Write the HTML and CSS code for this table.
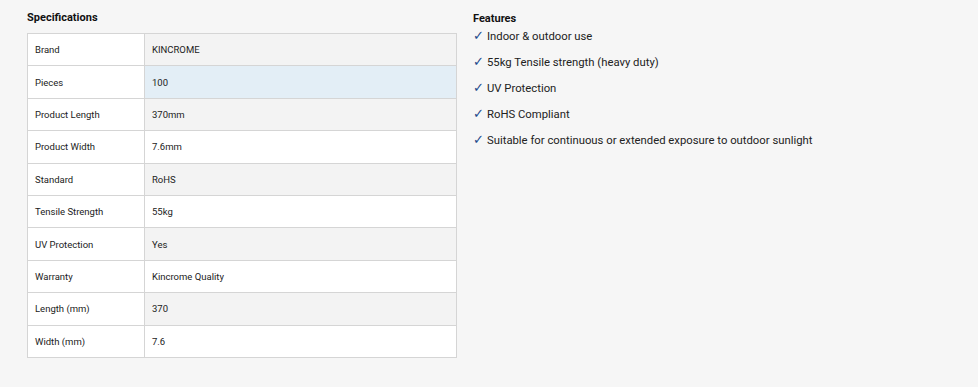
FILE: index.html
```html
<!DOCTYPE html>
<html>
<head>
  <title>Product Details</title>
  <link rel="stylesheet" href="styles.css">
</head>
<body>
  <div class="product-info">
    <div class="specs">
      <h3>Specifications</h3>
      <table class="spec-table">
        <tr><td>Brand</td><td>KINCROME</td></tr>
        <tr class="active"><td>Pieces</td><td>100</td></tr>
        <tr><td>Product Length</td><td>370mm</td></tr>
        <tr><td>Product Width</td><td>7.6mm</td></tr>
        <tr><td>Standard</td><td>RoHS</td></tr>
        <tr><td>Tensile Strength</td><td>55kg</td></tr>
        <tr><td>UV Protection</td><td>Yes</td></tr>
        <tr><td>Warranty</td><td>Kincrome Quality</td></tr>
        <tr><td>Length (mm)</td><td>370</td></tr>
        <tr><td>Width (mm)</td><td>7.6</td></tr>
      </table>
    </div>

    <div class="features">
      <h3>Features</h3>
      <ul>
        <li>Indoor &amp; outdoor use</li>
        <li>55kg Tensile strength (heavy duty)</li>
        <li>UV Protection</li>
        <li>RoHS Compliant</li>
        <li>Suitable for continuous or extended exposure to outdoor sunlight</li>
      </ul>
    </div>
  </div>
</body>
</html>
```

FILE: styles.css
```css
body {
  font-family: Roboto, "Liberation Sans", sans-serif;
  background-color: #f6f6f6;
  color: #222;
  margin: 0;
  padding: 0;
}

h3 {
  font-size: 11px;
  font-weight: bold;
  margin: 0;
  color: #111;
}

.product-info {
  display: flex;
  gap: 16px;
  padding: 11px 0 0 27px;
}

.specs {
  width: 430px;
}

.specs h3 {
  margin-bottom: 9px;
}

.spec-table {
  width: 100%;
  border-collapse: collapse;
  font-size: 9.5px;
}

.spec-table td {
  border: 1px solid #d5d5d5;
  height: 31.4px;
  padding: 0 7px;
  background-color: #fff;
}

.spec-table td:first-child {
  width: 102px;
}

.spec-table tr:nth-child(odd) td:last-child {
  background-color: #f3f3f3;
}

.spec-table tr.active td:last-child {
  background-color: #e3eef6;
}

.features h3 {
  margin-top: 1px;
}

.features ul {
  list-style: none;
  margin: 0;
  padding: 0;
  font-size: 11.3px;
}

.features li {
  line-height: 16px;
  margin-top: 10px;
  padding-left: 14px;
  position: relative;
}

.features li:first-child {
  margin-top: 4px;
}

.features li::before {
  content: "\2713";
  color: #1f4a8c;
  font-size: 12.5px;
  position: absolute;
  left: 0;
  top: -1px;
}
```
